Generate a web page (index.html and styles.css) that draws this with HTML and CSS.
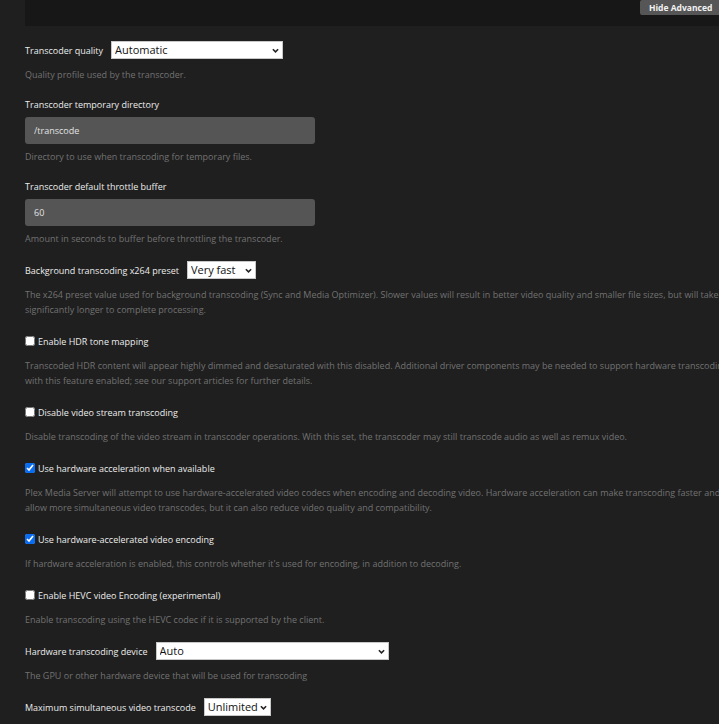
FILE: index.html
```html
<!DOCTYPE html>
<html lang="en">
<head>
    <meta charset="UTF-8">
    <meta name="viewport" content="width=device-width, initial-scale=1.0">
    <title>Transcoder Settings</title>
    <link rel="stylesheet" href="styles.css">
</head>
<body>
    <!-- Header strip with the advanced toggle -->
    <div class="top-bar">
        <button class="toggle-btn" type="button">Hide Advanced</button>
    </div>

    <form class="settings">
        <div class="setting">
            <div class="row">
                <label class="label" for="quality">Transcoder quality</label>
                <span class="select-wrap">
                    <select id="quality" class="select select-quality">
                        <option>Automatic</option>
                    </select>
                    <svg class="chevron" viewBox="0 0 8 5"><path d="M1 1l3 3 3-3" /></svg>
                </span>
            </div>
            <p class="desc">Quality profile used by the transcoder.</p>
        </div>

        <div class="setting">
            <label class="label block" for="tmpdir">Transcoder temporary directory</label>
            <input id="tmpdir" class="text-input" type="text" value="/transcode">
            <p class="desc">Directory to use when transcoding for temporary files.</p>
        </div>

        <div class="setting">
            <label class="label block" for="throttle">Transcoder default throttle buffer</label>
            <input id="throttle" class="text-input" type="text" value="60">
            <p class="desc">Amount in seconds to buffer before throttling the transcoder.</p>
        </div>

        <div class="setting">
            <div class="row">
                <label class="label" for="preset">Background transcoding x264 preset</label>
                <span class="select-wrap">
                    <select id="preset" class="select select-preset">
                        <option>Very fast</option>
                    </select>
                    <svg class="chevron" viewBox="0 0 8 5"><path d="M1 1l3 3 3-3" /></svg>
                </span>
            </div>
            <p class="desc">The x264 preset value used for background transcoding (Sync and Media Optimizer). Slower values will result in better video quality and smaller file sizes, but will take significantly longer to complete processing.</p>
        </div>

        <div class="setting">
            <label class="row check">
                <input type="checkbox" class="checkbox">
                <span class="label">Enable HDR tone mapping</span>
            </label>
            <p class="desc">Transcoded HDR content will appear highly dimmed and desaturated with this disabled. Additional driver components may be needed to support hardware transcoding with this feature enabled; see our support articles for further details.</p>
        </div>

        <div class="setting">
            <label class="row check">
                <input type="checkbox" class="checkbox">
                <span class="label">Disable video stream transcoding</span>
            </label>
            <p class="desc">Disable transcoding of the video stream in transcoder operations. With this set, the transcoder may still transcode audio as well as remux video.</p>
        </div>

        <div class="setting">
            <label class="row check">
                <input type="checkbox" class="checkbox" checked>
                <span class="label">Use hardware acceleration when available</span>
            </label>
            <p class="desc">Plex Media Server will attempt to use hardware-accelerated video codecs when encoding and decoding video. Hardware acceleration can make transcoding faster and allow more simultaneous video transcodes, but it can also reduce video quality and compatibility.</p>
        </div>

        <div class="setting">
            <label class="row check">
                <input type="checkbox" class="checkbox" checked>
                <span class="label">Use hardware-accelerated video encoding</span>
            </label>
            <p class="desc">If hardware acceleration is enabled, this controls whether it's used for encoding, in addition to decoding.</p>
        </div>

        <div class="setting">
            <label class="row check">
                <input type="checkbox" class="checkbox">
                <span class="label">Enable HEVC video Encoding (experimental)</span>
            </label>
            <p class="desc">Enable transcoding using the HEVC codec if it is supported by the client.</p>
        </div>

        <div class="setting">
            <div class="row">
                <label class="label" for="device">Hardware transcoding device</label>
                <span class="select-wrap">
                    <select id="device" class="select select-device">
                        <option>Auto</option>
                    </select>
                    <svg class="chevron" viewBox="0 0 8 5"><path d="M1 1l3 3 3-3" /></svg>
                </span>
            </div>
            <p class="desc">The GPU or other hardware device that will be used for transcoding</p>
        </div>

        <div class="setting">
            <div class="row">
                <label class="label" for="maxvideo">Maximum simultaneous video transcode</label>
                <span class="select-wrap">
                    <select id="maxvideo" class="select select-max">
                        <option>Unlimited</option>
                    </select>
                    <svg class="chevron" viewBox="0 0 8 5"><path d="M1 1l3 3 3-3" /></svg>
                </span>
            </div>
        </div>
    </form>
</body>
</html>
```

FILE: styles.css
```css
body {
    margin: 0;
    background-color: #1f1f1f;
    color: #e6e6e6;
    font-family: 'Open Sans', 'Noto Sans', sans-serif;
    font-size: 9px;
    overflow: hidden;
    height: 724px;
}

.top-bar {
    margin-left: 25px;
    height: 26px;
    background-color: #171717;
    display: flex;
    justify-content: flex-end;
    align-items: flex-start;
}

.toggle-btn {
    height: 15px;
    padding: 0 4px 0 9px;
    border: none;
    border-radius: 2px 0 0 2px;
    background-color: #565656;
    color: #f2f2f2;
    font-family: inherit;
    font-size: 8.5px;
    font-weight: 700;
    line-height: 15px;
    width: 79px;
    text-align: left;
    white-space: nowrap;
}

.settings {
    width: 712px;
    padding: 15px 0 0 25px;
    margin: 0;
}

.setting {
    margin-bottom: 15px;
}

.row {
    display: flex;
    align-items: center;
    height: 18px;
}

.label {
    line-height: 15px;
    color: #ececec;
}

.label.block {
    display: block;
    margin-bottom: 5px;
}

.row .label {
    margin-right: 8px;
}

.check .label {
    margin-left: 3px;
}

.checkbox {
    width: 10px;
    height: 10px;
    margin: 0;
    accent-color: #0a6cf0;
}

.desc {
    margin: 8px 0 0;
    line-height: 15px;
    color: #727272;
}

.text-input {
    display: block;
    box-sizing: border-box;
    width: 290px;
    height: 27px;
    padding: 0 9px;
    border: none;
    border-radius: 3px;
    background-color: #555555;
    color: #e2e2e2;
    font-family: inherit;
    font-size: 9px;
}

.text-input + .desc {
    margin-top: 5px;
}

.select-wrap {
    position: relative;
    display: inline-block;
    height: 18px;
}

.select {
    appearance: none;
    box-sizing: border-box;
    height: 18px;
    margin: 0;
    padding: 0 12px 0 3px;
    border: 1px solid #c8c8c8;
    border-radius: 0;
    background-color: #ffffff;
    color: #111;
    font-family: inherit;
    font-size: 11px;
    line-height: 16px;
}

.select-quality {
    width: 172px;
}

.select-preset {
    width: 69px;
}

.select-device {
    width: 233px;
}

.select-max {
    width: 67px;
    padding-right: 10px;
}

.chevron {
    position: absolute;
    right: 4px;
    top: 7px;
    width: 7px;
    height: 5px;
    fill: none;
    stroke: #222;
    stroke-width: 1.8;
    pointer-events: none;
}
```
